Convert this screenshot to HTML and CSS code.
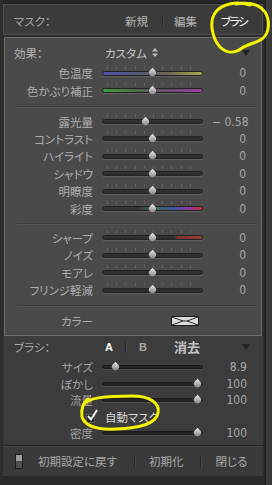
FILE: index.html
```html
<!DOCTYPE html>
<html lang="ja">
<head>
<meta charset="utf-8">
<title>マスク</title>
<link rel="stylesheet" href="styles.css">
</head>
<body>
<div class="app">
  <div class="main">
    <div class="topstrip"></div>
    <div class="header">
      <span class="hlabel">マスク：</span>
      <nav class="tabs">
        <span class="tab">新規</span>
        <span class="vsep"></span>
        <span class="tab">編集</span>
        <span class="tab active">ブラシ</span>
      </nav>
    </div>

    <section class="effects">
      <div class="efx-row">
        <span class="efx-label">効果：</span>
        <span class="efx-value">カスタム
          <svg class="updown" width="6" height="9" viewBox="0 0 6 9"><path d="M3 0 L6 3.5 L0 3.5 Z M3 9 L6 5.5 L0 5.5 Z" fill="#bdbdbd"/></svg>
        </span>
        <span class="tri"></span>
      </div>

      <div class="srow"><span class="lbl">色温度</span><div class="track ticks temp"><span class="thumb" style="--p:0.5"></span></div><span class="val">0</span></div>
      <div class="srow"><span class="lbl">色かぶり補正</span><div class="track ticks tint"><span class="thumb" style="--p:0.5"></span></div><span class="val">0</span></div>
      <div class="sep"></div>
      <div class="srow"><span class="lbl">露光量</span><div class="track ticks"><span class="thumb" style="--p:0.4275"></span></div><span class="val">− 0.58</span></div>
      <div class="srow"><span class="lbl">コントラスト</span><div class="track ticks"><span class="thumb" style="--p:0.5"></span></div><span class="val">0</span></div>
      <div class="srow"><span class="lbl">ハイライト</span><div class="track ticks"><span class="thumb" style="--p:0.5"></span></div><span class="val">0</span></div>
      <div class="srow"><span class="lbl">シャドウ</span><div class="track ticks"><span class="thumb" style="--p:0.5"></span></div><span class="val">0</span></div>
      <div class="srow"><span class="lbl">明瞭度</span><div class="track ticks"><span class="thumb" style="--p:0.5"></span></div><span class="val">0</span></div>
      <div class="srow"><span class="lbl">彩度</span><div class="track ticks sat"><span class="thumb" style="--p:0.5"></span></div><span class="val">0</span></div>
      <div class="sep sep-b"></div>
      <div class="srow"><span class="lbl">シャープ</span><div class="track ticks sharp"><span class="thumb" style="--p:0.5"></span></div><span class="val">0</span></div>
      <div class="srow"><span class="lbl">ノイズ</span><div class="track ticks"><span class="thumb" style="--p:0.5"></span></div><span class="val">0</span></div>
      <div class="srow"><span class="lbl">モアレ</span><div class="track ticks"><span class="thumb" style="--p:0.5"></span></div><span class="val">0</span></div>
      <div class="srow"><span class="lbl">フリンジ軽減</span><div class="track ticks"><span class="thumb" style="--p:0.5"></span></div><span class="val">0</span></div>
      <div class="sep sep-c"></div>
      <div class="srow"><span class="lbl">カラー</span>
        <div class="swatch-cell">
          <svg class="swatch" width="28" height="10" viewBox="0 0 28 10"><rect x="0.5" y="0.5" width="27" height="9" fill="#dcdcdc" stroke="#1c1c1c"/><path d="M1 1 L12 5 L1 9 M27 1 L16 5 L27 9 M12 5 L16 5" stroke="#2a2a2a" fill="none" stroke-width="1"/></svg>
        </div>
        <span class="val"></span>
      </div>
    </section>

    <section class="brush">
      <div class="brow bhead">
        <span class="blabel">ブラシ：</span>
        <div class="abrow">
          <span class="ab a">A</span>
          <span class="vsep"></span>
          <span class="ab b">B</span>
          <span class="erase">消去</span>
        </div>
        <span class="tricell"><span class="tri"></span></span>
      </div>
      <div class="brow"><span class="lbl">サイズ</span><div class="track thin"><span class="thumb" style="--p:0.089"></span></div><span class="val">8.9</span></div>
      <div class="brow"><span class="lbl">ぼかし</span><div class="track thin"><span class="thumb" style="--p:1"></span></div><span class="val">100</span></div>
      <div class="brow"><span class="lbl">流量</span><div class="track thin"><span class="thumb" style="--p:1"></span></div><span class="val">100</span></div>
      <div class="checkrow">
        <span class="checkbox"><svg width="12" height="13" viewBox="0 0 12 13"><path d="M2 7 L5 10.5 L11 1" stroke="#f2f2f2" stroke-width="2" fill="none"/></svg></span>
        <span class="checklabel">自動マスク</span>
      </div>
      <div class="brow"><span class="lbl">密度</span><div class="track thin"><span class="thumb" style="--p:1"></span></div><span class="val">100</span></div>
    </section>

    <footer class="footer">
      <span class="switch"></span>
      <span class="fbtn reset">初期設定に戻す</span>
      <span class="vsep"></span>
      <span class="fbtn">初期化</span>
      <span class="vsep"></span>
      <span class="fbtn">閉じる</span>
    </footer>
    <div class="bottom"></div>
  </div>
  <div class="rail"></div>
</div>

<svg class="annot" width="272" height="485" viewBox="0 0 272 485">
  <path d="M250 5 C238 1 222 3 215 13 C209 22 212 38 220 47 C226 53 234 54 242 48 C248 44 256 43 262 39 C270 33 270 20 265 12 C260 5 250 2 236 4" fill="none" stroke="#f4f400" stroke-width="3" stroke-linecap="round"/>
  <path d="M83 406 C86 397 108 396 132 396 C150 396 160 403 158 413 C156 424 140 428 116 429 C96 430 85 426 82 417 C81 411 82 404 88 399" fill="none" stroke="#f4f400" stroke-width="3" stroke-linecap="round"/>
</svg>
</body>
</html>
```

FILE: styles.css
```css
* { box-sizing: border-box; margin: 0; padding: 0; }

html, body {
  width: 272px;
  height: 485px;
  overflow: hidden;
}

body {
  position: relative;
  background: #2b2b2b;
  font-family: "Noto Sans CJK JP", "Noto Sans", sans-serif;
  font-size: 11.5px;
  line-height: 14px;
  font-feature-settings: "palt";
  color: #b0b0b0;
}

.app {
  display: flex;
  height: 485px;
}

.main {
  width: 264px;
  display: flex;
  flex-direction: column;
  padding-left: 3px;
  background: #2d2d2d;
}

.rail {
  flex: 1;
  background: #3b3b3b;
  border-left: 2px solid #252525;
}

.topstrip {
  height: 4px;
  background: #272727;
  border-bottom: 1px solid #1f1f1f;
}

/* header */
.header {
  height: 31px;
  margin-right: 1px;
  background: #3b3b3b;
  border: 1px solid #4f4f4f;
  display: flex;
  align-items: center;
  padding: 2px 15px 0 10px;
}

.hlabel { color: #a8a8a8; }

.tabs {
  margin-left: auto;
  display: flex;
  align-items: center;
}

.tab { color: #b4b4b4; }
.tabs .vsep { margin: 0 11px 0 14px; }
.tab.active {
  color: #ffffff;
  margin-left: 24px;
  letter-spacing: -1.5px;
}

.vsep {
  display: inline-block;
  width: 1px;
  height: 11px;
  background: #262626;
  box-shadow: 1px 0 0 #4a4a4a;
}

/* effects panel */
.effects {
  margin: 2px 2px 0 1px;
  height: 299px;
  background: #4a4a4a;
  border: 1px solid #6d6d6d;
  padding-top: 3px;
}

.efx-row {
  height: 23.5px;
  display: flex;
  align-items: center;
  padding: 0 11px 0 9px;
}

.efx-label {
  width: 91px;
  color: #b4b4b4;
}

.efx-value {
  color: #c4c4c4;
  display: flex;
  align-items: center;
  gap: 5px;
}

.tri {
  margin-left: auto;
  width: 0;
  height: 0;
  border-left: 4px solid transparent;
  border-right: 4px solid transparent;
  border-top: 6px solid #232323;
}

.srow {
  display: grid;
  grid-template-columns: 88px 101px 1fr;
  column-gap: 9px;
  height: 17.4px;
  align-items: center;
  padding-right: 15px;
}

.lbl {
  text-align: right;
  white-space: nowrap;
  color: #adadad;
}

.val {
  text-align: right;
  font-family: "Liberation Sans Narrow", "DejaVu Sans Condensed", "Liberation Sans", sans-serif;
  font-size: 12px;
  color: #a8a8a8;
  white-space: nowrap;
}

.sep {
  height: 13.6px;
  display: flex;
  align-items: center;
  padding: 0 4px 0 12px;
}

.sep::after {
  content: "";
  flex: 1;
  height: 1px;
  background: #3c3c3c;
  box-shadow: 0 1px 0 #555555;
}

.sep-b { height: 12px; }
.sep-c { height: 14px; }

/* slider tracks */
.track {
  position: relative;
  height: 5px;
  border-radius: 3px;
  background: #2f2f2f;
  border: 1px solid #222222;
  box-shadow: 0 1px 0 rgba(255, 255, 255, 0.12);
}

.track.ticks::before {
  content: "";
  position: absolute;
  left: 4px;
  right: 4px;
  top: -6px;
  height: 3px;
  background: repeating-linear-gradient(90deg, rgba(255, 255, 255, 0.14) 0 1px, transparent 1px 9.2px);
}

.track.temp { background: linear-gradient(90deg, #4b52a6, #55587c 35%, #6a6a55 65%, #aaa848); }
.track.tint { background: linear-gradient(90deg, #3f9e3f, #4f6a4f 35%, #6a4f6a 65%, #a53ea8); }
.track.sat { background: linear-gradient(90deg, #333333 0%, #363636 35%, #3f6b50 52%, #3a58a2 72%, #8e3aa0 86%, #c73030 100%); }
.track.sharp { background: linear-gradient(90deg, #2f2f2f 0%, #2f2f2f 72%, #7a3434 75%, #9a3a3a 100%); }

.track.thin {
  height: 4px;
  background: #262626;
  border-color: #1c1c1c;
  box-shadow: 0 1px 0 rgba(255, 255, 255, 0.1);
}

.thumb {
  position: absolute;
  top: 50%;
  left: calc(var(--p) * (100% - 9px));
  width: 9px;
  height: 10px;
  transform: translateY(-58%);
}

.thumb::before {
  content: "";
  position: absolute;
  left: 1px;
  top: 2px;
  width: 7px;
  height: 7px;
  transform: rotate(45deg);
  border-radius: 0 55% 55% 55%;
  background: linear-gradient(135deg, #ececec, #a5a5a5 60%, #7c7c7c);
  box-shadow: 0 0 0 0.5px #3a3a3a;
}

.swatch-cell {
  display: flex;
  justify-content: flex-start;
  padding-left: 69px;
}

.swatch { display: block; }

/* brush section */
.brush {
  margin-right: 1px;
  height: 109px;
  background: #3c3c3c;
  padding-right: 16px;
}

.brow {
  display: grid;
  grid-template-columns: 90px 101px 1fr;
  column-gap: 9px;
  height: 16.5px;
  align-items: center;
}

.brow .lbl { color: #a2a2a2; }

.bhead { height: 22.75px; }

.blabel {
  padding-left: 11px;
  color: #a4a4a4;
}

.abrow {
  display: flex;
  align-items: center;
  padding-left: 3px;
}

.ab {
  font-family: "Liberation Sans", "DejaVu Sans", sans-serif;
  font-weight: bold;
  font-size: 11px;
}

.ab.a { color: #ffffff; }
.ab.b { color: #a9a3a0; }
.abrow .vsep { margin: 0 13px 0 12px; }

.erase {
  margin-left: 27px;
  font-weight: bold;
  font-size: 13px;
  color: #c4c4c4;
}

.tricell {
  display: flex;
  justify-content: flex-end;
}

.tricell .tri { margin-right: -3px; }

.checkrow {
  height: 16.5px;
  display: flex;
  align-items: center;
  padding-left: 83px;
}

.checkbox {
  position: relative;
  width: 9px;
  height: 9px;
  background: #1e1e1e;
  border: 1px solid #5a5a5a;
  margin-top: 3px;
}

.checkbox svg {
  position: absolute;
  left: -1px;
  top: -6px;
}

.checklabel {
  margin-left: 10px;
  color: #dadada;
}

/* footer */
.footer {
  margin-right: 1px;
  height: 31px;
  background: #3a3a3a;
  border-top: 1px solid #262626;
  box-shadow: inset 0 1px 0 #484848;
  display: flex;
  align-items: center;
  padding-left: 12px;
}

.switch {
  width: 8px;
  height: 15px;
  border: 1px solid #1d1d1d;
  background: linear-gradient(180deg, #9c9c9c 0 50%, #4d4d4d 50% 100%);
}

.fbtn { color: #a8a8a8; }
.fbtn.reset { margin-left: 15px; }
.footer .vsep { margin: 0 14px 0 17px; }

.bottom {
  flex: 1;
  background: #2a2a2a;
}

/* hand-drawn annotations over the screenshot */
.annot {
  position: absolute;
  left: 0;
  top: 0;
  pointer-events: none;
}
```
